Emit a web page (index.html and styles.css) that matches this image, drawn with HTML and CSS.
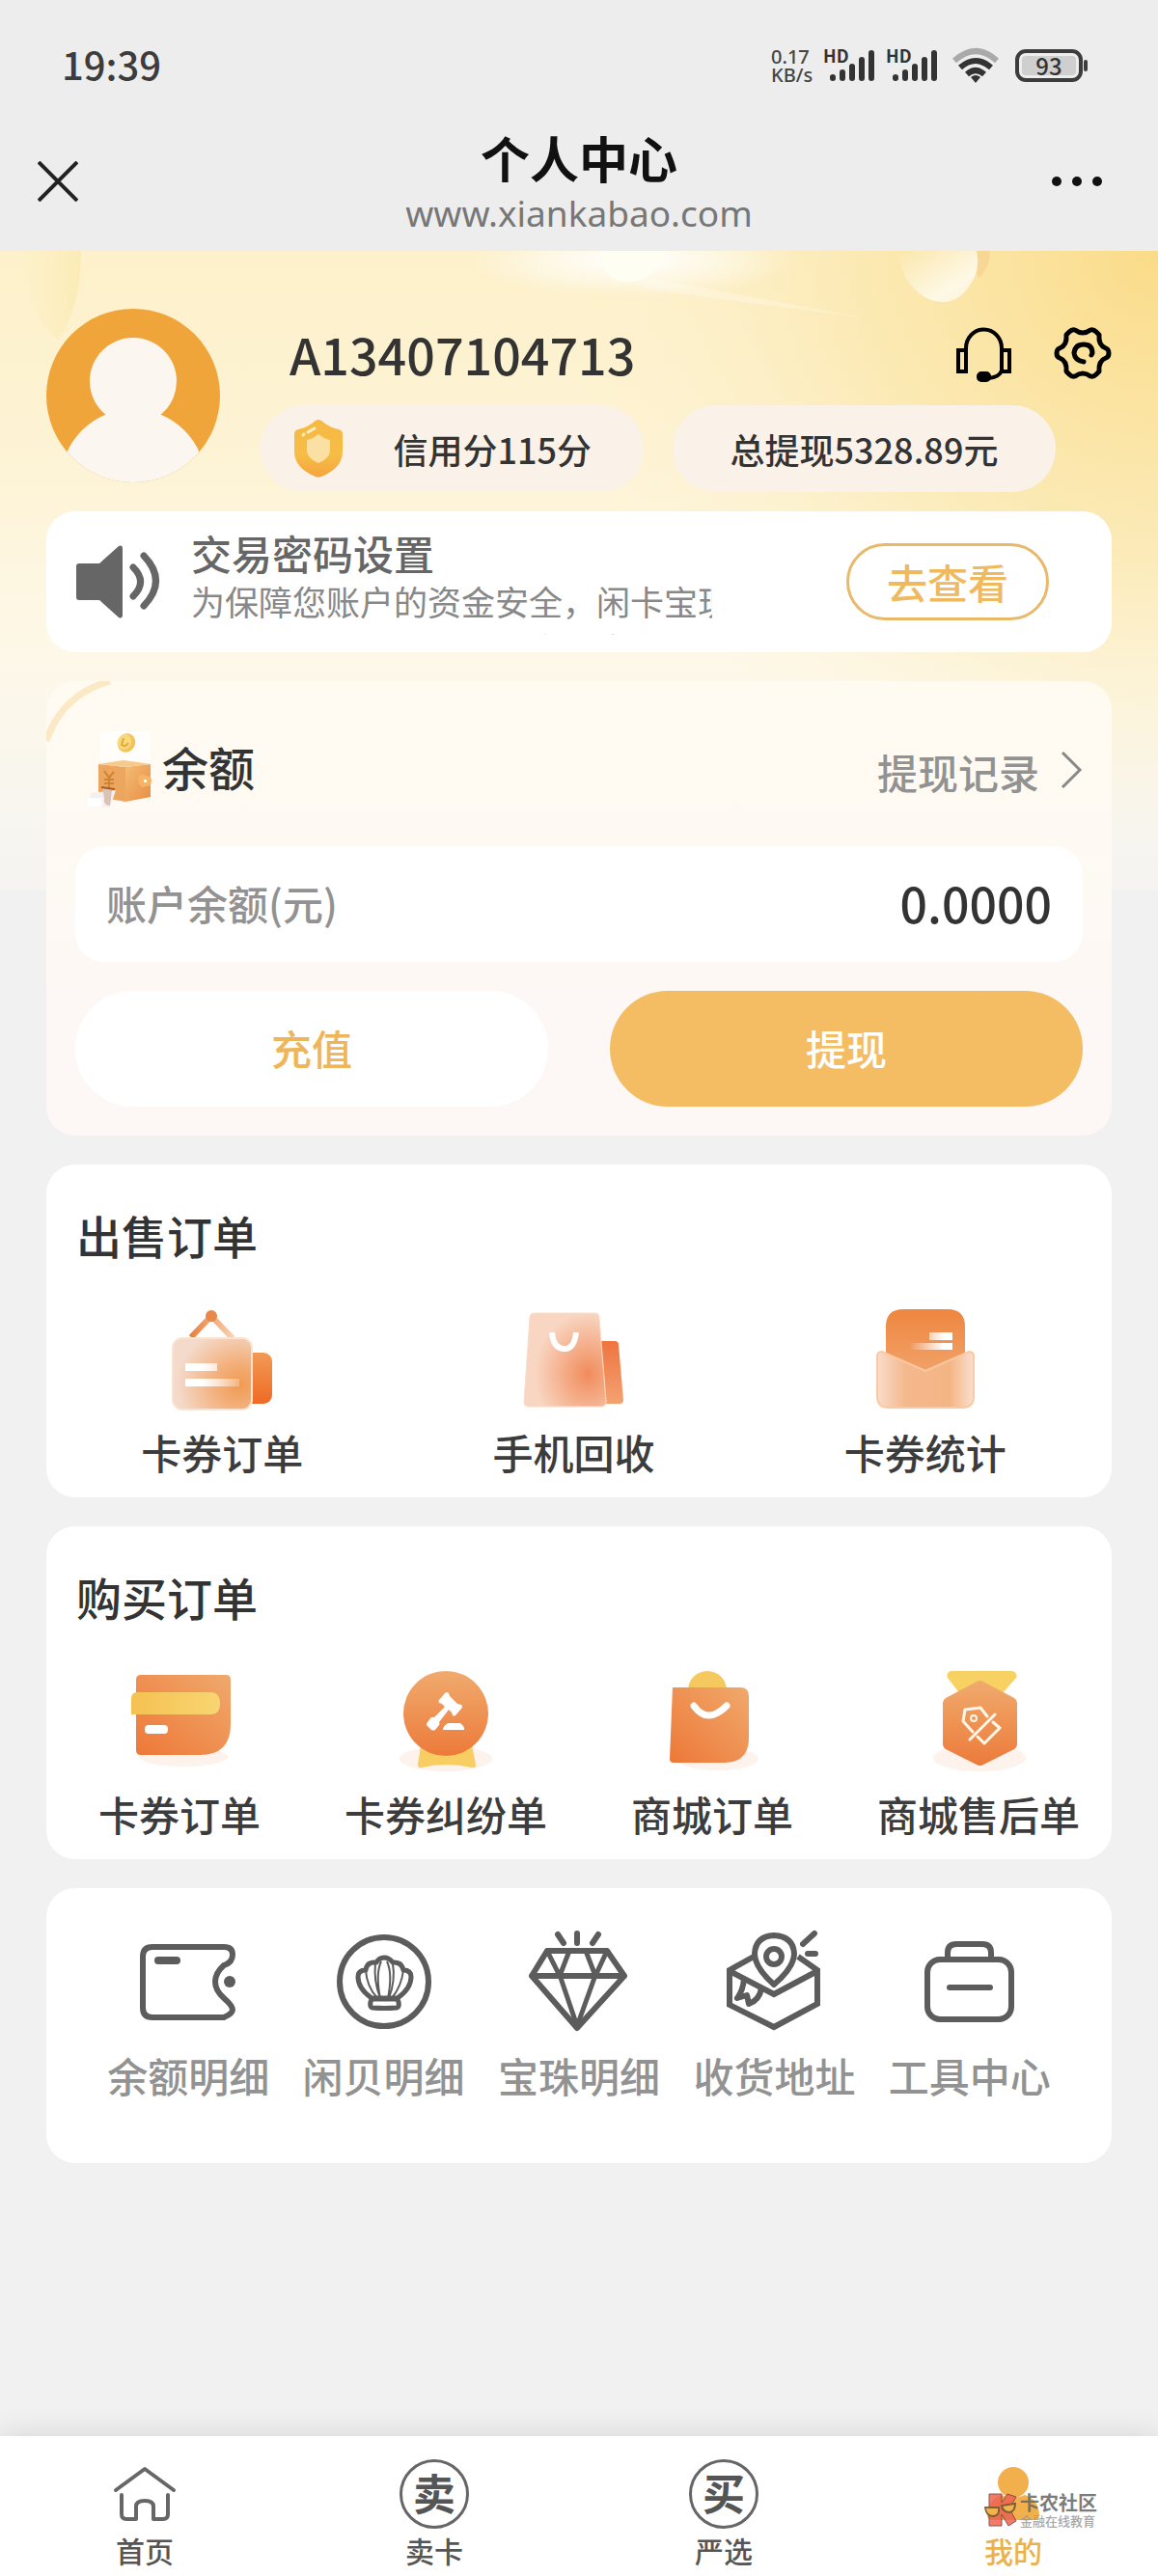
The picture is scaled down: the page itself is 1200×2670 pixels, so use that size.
FILE: index.html
```html
<!DOCTYPE html>
<html lang="zh-CN">
<head>
<meta charset="utf-8">
<meta name="viewport" content="width=device-width, initial-scale=1">
<title>个人中心</title>
<link rel="stylesheet" href="styles.css">
</head>
<body>
<header class="top">
  <div class="status">
    <span class="clock">19:39</span>
    <div class="status-right">
      <span class="speed">0.17<br>KB/s</span>
      <span class="signal"><b>HD</b><svg width="50" height="34" viewBox="0 0 50 34" stroke="#333" stroke-width="6" stroke-linecap="round"><path d="M4 30v-1M14 30v-6M24 30V18M34 30V11M44 30V4"/></svg></span>
      <span class="signal"><b>HD</b><svg width="50" height="34" viewBox="0 0 50 34" stroke="#333" stroke-width="6" stroke-linecap="round"><path d="M4 30v-1M14 30v-6M24 30V18M34 30V11M44 30V4"/></svg></span>
      <svg class="wifi" width="50" height="38" viewBox="0 0 50 38" fill="none" stroke-width="6"><path stroke="#aaa" d="M3 14q22-20 44 0"/><path stroke="#333" d="M9 21q16-14 32 0M16 28q9-8 18 0"/><path fill="#333" d="M25 37l-5-6q5-4 10 0z"/></svg>
      <span class="battery"><span>93</span></span>
    </div>
  </div>
  <nav class="nav">
    <button class="nav-btn" type="button" aria-label="关闭"><svg width="42" height="42" viewBox="0 0 42 42" stroke="#222" stroke-width="4"><path d="M1 1l40 40M41 1L1 41"/></svg></button>
    <div class="nav-title"><h1>个人中心</h1><p>www.xiankabao.com</p></div>
    <button class="nav-btn" type="button" aria-label="更多"><svg width="54" height="12" viewBox="0 0 54 12" fill="#111"><circle cx="6" cy="6" r="5"/><circle cx="27" cy="6" r="5"/><circle cx="48" cy="6" r="5"/></svg></button>
  </nav>
</header>

<main class="page">
  <svg class="hero" viewBox="0 0 1200 662" preserveAspectRatio="none" aria-hidden="true">
    <defs>
      <linearGradient id="hv" x1="0" y1="0" x2="0" y2="1"><stop offset="0" stop-color="#fdf1cb"/><stop offset=".3" stop-color="#fdf3d4"/><stop offset=".65" stop-color="#fdf8e9"/><stop offset="1" stop-color="#f5f4f2"/></linearGradient>
      <radialGradient id="hr" cx="1200" cy="0" r="620" gradientUnits="userSpaceOnUse"><stop offset="0" stop-color="#fadb88"/><stop offset=".5" stop-color="#fbe7ab" stop-opacity=".75"/><stop offset="1" stop-color="#fdf2cf" stop-opacity="0"/></radialGradient>
      <radialGradient id="hf"><stop offset="0" stop-color="#fff"/><stop offset="1" stop-color="#fff" stop-opacity="0"/></radialGradient>
      <linearGradient id="hs" x1="0" y1="0" x2="1" y2="1"><stop offset="0" stop-color="#fbe7ab"/><stop offset=".7" stop-color="#fef8e6"/><stop offset="1" stop-color="#fdf0cc"/></linearGradient>
      <linearGradient id="hl" x1="0" y1="0" x2="1" y2="0"><stop offset="0" stop-color="#fcedb8" stop-opacity="0"/><stop offset="1" stop-color="#faeab0"/></linearGradient>
    </defs>
    <path fill="url(#hv)" d="M0 0h1200v662H0z"/>
    <path fill="url(#hr)" d="M500 0h700v662H500z"/>
    <path fill="url(#hl)" d="M20 0h64q0 60-24 92Q30 70 20 0z" opacity=".8"/>
    <ellipse cx="655" cy="10" rx="170" ry="38" fill="url(#hf)"/>
    <path d="M622 0h72q-18 32-44 32T622 0z" fill="#fffef2"/>
    <path d="M660 26l240 44-230-30z" fill="#fff" opacity=".25"/>
    <path d="M1004 0h22q0 18-12 28z" fill="#f8d795"/>
    <path d="M930 0h82q4 20-6 34-12 20-30 19-20-1-34-20-10-14-12-33z" fill="url(#hs)"/>
  </svg>

  <section class="profile">
    <svg class="avatar" viewBox="0 0 180 180" role="img" aria-label="头像"><defs><clipPath id="av"><circle cx="90" cy="90" r="90"/></clipPath></defs><g clip-path="url(#av)"><path fill="#f0a53a" d="M0 0h180v180H0z"/><g fill="#fcf6f1"><circle cx="90" cy="75" r="45"/><circle cx="90" cy="179" r="75"/></g></g></svg>
    <div class="profile-info">
      <div class="name-row">
        <strong class="name">A13407104713</strong>
        <button type="button" aria-label="客服"><svg width="60" height="58" viewBox="0 0 60 58" fill="none" stroke="#000" stroke-width="4"><path d="M11 25v-2a18 19 0 0 1 37 0v2"/><path d="M3 25h8v22H3zM48 25h8v22h-8z"/><path d="M48 46q-2 7-14 8"/><rect x="24" y="49" width="11" height="7" rx="3" fill="#000"/></svg></button>
        <button type="button" aria-label="设置"><svg width="60" height="58" viewBox="0 0 60 58" fill="none" stroke="#000" stroke-width="5" stroke-linejoin="round" stroke-linecap="round"><path d="M22 4q8 6 16 0 3-1 6 2l3 3q-1 11 7 14 3 1 3 5t-3 5q-8 3-7 14l-3 3q-3 3-6 2-8-6-16 0-3 1-6-2l-3-3q1-11-7-14-3-1-3-5t3-5q8-3 7-14l3-3q3-3 6-2z"/><path d="M31 37q-9-1-10-9 1-9 10-9t9 9l-1 2"/></svg></button>
      </div>
      <div class="pills">
        <span class="pill pill-credit"><svg width="52" height="62" viewBox="0 0 52 62"><defs><linearGradient id="sh" x1="0" y1="0" x2="0" y2="1"><stop offset="0" stop-color="#f6b944"/><stop offset=".6" stop-color="#f7bd45"/><stop offset="1" stop-color="#f5a43f"/></linearGradient></defs><path fill="url(#sh)" d="M23 2q3-2 6 0 8 7 18 9 4 1 4 5v18q0 17-22 26-3 1-6 0Q1 51 1 34V16q0-4 4-5 10-2 18-9z"/><path fill="#fbe0a3" d="M26 16q6 5 12 6v11q0 8-12 13-12-5-12-13V22q6-1 12-6z"/><path d="M10 17l1-1M15 14l7-4" stroke="#fff0c8" stroke-width="3" stroke-linecap="round"/></svg>信用分115分</span>
        <span class="pill">总提现5328.89元</span>
      </div>
    </div>
  </section>

  <section class="notice">
    <svg class="speaker" width="88" height="78" viewBox="0 0 88 78"><path fill="#666" d="M3 20h21L44 2q4-2 4 3v68q0 5-4 3L24 58H3q-3 0-3-3V23q0-3 3-3z"/><path fill="none" stroke="#666" stroke-width="7" stroke-linecap="round" d="M59 24q15 15 0 30M70 12q25 26 0 52"/></svg>
    <div class="notice-text"><h2>交易密码设置</h2><p>为保障您账户的资金安全，闲卡宝现<br>请尽快前往设置页面，完成密码设置</p></div>
    <button class="notice-btn" type="button">去查看</button>
  </section>

  <section class="balance">
    <svg class="balance-arc" width="90" height="90" viewBox="0 0 90 90" fill="none" stroke="#fbe9c6" stroke-width="7" aria-hidden="true"><path d="M0 62Q16 14 66 0"/></svg>
    <div class="balance-head">
      <svg width="88" height="84" viewBox="0 0 88 84"><defs><linearGradient id="wb" x1="0" y1="0" x2="1" y2="1"><stop offset="0" stop-color="#f3bd74"/><stop offset="1" stop-color="#e98d45"/></linearGradient></defs><path fill="#fff" opacity=".7" d="M26 2h52v30H26z"/><ellipse cx="53" cy="14" rx="9" ry="10" fill="#f0c458" transform="rotate(25 53 14)"/><ellipse cx="51" cy="13" rx="7" ry="8" fill="#f8d97c" transform="rotate(25 51 13)"/><path d="M50 9l-2 7q4 3 7-2" fill="none" stroke="#e0aa3c" stroke-width="2"/><path fill="#eda660" d="M24 36l28 3v36l-28-5z"/><path fill="url(#wb)" d="M52 39l26-3v34l-26 5z"/><path fill="#f7c98c" d="M24 36l26-4 28 4-26 3z"/><path d="M30 43l5 7 5-6M35 50v10M30 52h10M30 56h10" fill="none" stroke="#cf8335" stroke-width="2"/><path fill="#f6b565" d="M65 50q3-6 7-2 7 0 7 5 0 6-6 6-7 4-8-9z"/><path fill="#fff" d="M71 52h3v3h-3z"/><path fill="#f6efef" d="M16 66l26-3-6 18-22-1z"/><path fill="#d9c2b6" d="M28 60l10 3-2 16q-7 0-6-8z"/><path d="M27 60l14 2" stroke="#a95a20" stroke-width="2"/><path fill="#fff" d="M12 71h16v9H12z"/></svg>
      <h2>余额</h2>
      <a href="#records"><span>提现记录</span><svg width="26" height="40" viewBox="0 0 26 40" fill="none" stroke="#888" stroke-width="3"><path d="M5 2l18 18L5 38"/></svg></a>
    </div>
    <div class="balance-row"><span>账户余额(元)</span><strong>0.0000</strong></div>
    <div class="balance-actions"><button type="button" class="recharge">充值</button><button type="button" class="withdraw">提现</button></div>
  </section>

  <section class="card">
    <h2>出售订单</h2>
    <div class="items items-3">
      <a href="#sell-cards"><svg width="120" height="120" viewBox="0 0 120 120"><defs><linearGradient id="a1" x1="0" y1="0" x2="0" y2="1"><stop offset="0" stop-color="#f29a55"/><stop offset="1" stop-color="#ee6a25"/></linearGradient><radialGradient id="a2" cx=".85" cy=".65" r=".8"><stop offset="0" stop-color="#f09a52"/><stop offset=".4" stop-color="#f3b07c"/><stop offset="1" stop-color="#f4dacb"/></radialGradient><linearGradient id="a3"><stop offset="0" stop-color="#ea813f"/><stop offset="1" stop-color="#f9d0b0"/></linearGradient><linearGradient id="w1"><stop offset=".3" stop-color="#fff"/><stop offset="1" stop-color="#fff" stop-opacity=".25"/></linearGradient></defs><path d="M28 36l21-22 22 23" fill="none" stroke="url(#a3)" stroke-width="6"/><circle cx="49" cy="14" r="6" fill="#e9884b"/><rect x="80" y="52" width="32" height="53" rx="9" fill="url(#a1)"/><rect x="9" y="37" width="82" height="74" rx="10" fill="url(#a2)" stroke="#fbe3d2" stroke-width="2"/><path d="M22 63h33v8H22zM22 79h56v8H22z" fill="url(#w1)"/></svg>卡券订单</a>
      <a href="#phones"><svg width="120" height="120" viewBox="0 0 120 120"><defs><linearGradient id="b1" x1="0" y1="0" x2="0" y2="1"><stop offset="0" stop-color="#ee7440"/><stop offset="1" stop-color="#f4a271"/></linearGradient><radialGradient id="b2" cx=".78" cy=".65" r=".65"><stop offset="0" stop-color="#f08c5c"/><stop offset=".4" stop-color="#f4a983"/><stop offset="1" stop-color="#f8d6c2"/></radialGradient></defs><path fill="url(#b1)" d="M86 40h17q4 0 4 4l5 57q0 4-4 4H86z"/><path fill="url(#b2)" stroke="#fbdcc9" d="M20 11h62q5 0 5 5l7 86q0 6-5 6H14q-5 0-5-5l6-87q0-5 5-5z"/><path d="M38 31q1 16 12 17t13-17" fill="none" stroke="#fff" stroke-width="6"/></svg>手机回收</a>
      <a href="#stats"><svg width="120" height="120" viewBox="0 0 120 120"><defs><linearGradient id="c1" x1="0" y1="0" x2="0" y2="1"><stop offset="0" stop-color="#ee8640"/><stop offset="1" stop-color="#f1a36a"/></linearGradient><linearGradient id="c2"><stop offset="0" stop-color="#fadccb"/><stop offset=".3" stop-color="#f4b88c"/><stop offset=".75" stop-color="#f4b584"/><stop offset="1" stop-color="#fadfd0"/></linearGradient><linearGradient id="w2"><stop offset="0" stop-color="#fff" stop-opacity="0"/><stop offset=".8" stop-color="#fff"/></linearGradient></defs><path fill="url(#c1)" d="M37 7h46q18 0 18 18v50H19V25Q19 7 37 7z"/><path d="M64 31h24v8H64zM43 42h45v7H43z" fill="url(#w2)"/><path fill="url(#c2)" stroke="#fac9a3" stroke-width="2" d="M15 51l45 20 45-20q5 0 5 5v41q0 12-12 12H22q-12 0-12-12V56q0-5 5-5z"/></svg>卡券统计</a>
    </div>
  </section>

  <section class="card">
    <h2>购买订单</h2>
    <div class="items items-4">
      <a href="#buy-cards"><svg width="120" height="120" viewBox="0 0 120 120"><defs><linearGradient id="o1" x1="0" y1="1" x2="1" y2="0"><stop offset="0" stop-color="#ed7838"/><stop offset="1" stop-color="#f0a96c"/></linearGradient><linearGradient id="y1"><stop offset="0" stop-color="#f5c152"/><stop offset="1" stop-color="#f8d572"/></linearGradient></defs><ellipse cx="64" cy="96" rx="46" ry="10" fill="#fdf2ec"/><path fill="url(#o1)" d="M20 11h88q5 0 5 5v46q0 32-32 32H20q-5 0-5-5V16q0-5 5-5z"/><path fill="url(#y1)" d="M16 29h76q10 0 10 11.500T92 52H10V36q0-7 6-7z"/><rect x="24" y="63" width="24" height="9" rx="4" fill="#fff"/></svg>卡券订单</a>
      <a href="#disputes"><svg width="120" height="120" viewBox="0 0 120 120"><defs><linearGradient id="o2" x1="0" y1="0" x2="0" y2="1"><stop offset="0" stop-color="#f0ab6d"/><stop offset="1" stop-color="#ec7a3a"/></linearGradient></defs><ellipse cx="60" cy="98" rx="48" ry="13" fill="#fdf2ec"/><path fill="#f8cd62" d="M34 84h53l4 20q0 4-4 3-27-6-52 0-4 1-4-3z"/><circle cx="60" cy="51" r="44" fill="url(#o2)"/><g fill="#fff"><path d="M59 30q2-2 4 0l1 3 8 8 4 1q2 2 0 4l-6 7q-2 1-3 0l-1-3-3-3-10 13q1 2 0 3l-4 5q-2 1-4 0l-5-5q0-2 1-3l3-4q2-2 4-1l11-11-3-3-3-1q-1-2 0-3z"/><path d="M62 61h13q5 4 4 7H57q0-4 5-7z"/></g></svg>卡券纠纷单</a>
      <a href="#mall"><svg width="120" height="120" viewBox="0 0 120 120"><ellipse cx="66" cy="98" rx="42" ry="12" fill="#fdf2ec"/><circle cx="55" cy="27" r="20" fill="#f5c95f"/><path fill="url(#o1)" d="M19 24h70q9 0 9 9v43q0 26-26 26H20q-4 0-4-4z"/><path d="M41 43q14 20 34 0" fill="none" stroke="#fff" stroke-width="7" stroke-linecap="round"/></svg>商城订单</a>
      <a href="#after-sales"><svg width="120" height="120" viewBox="0 0 120 120"><ellipse cx="61" cy="97" rx="48" ry="14" fill="#fdf2ec"/><path fill="#f7d162" d="M32 7h62q7 1 5 7L84 31H41L28 14q-2-6 4-7z"/><path fill="url(#o2)" d="M58 18q4-2 7 0l32 17q3 2 3 5v43q0 3-3 5l-32 16q-4 2-7 0L26 88q-3-2-3-5V40q0-3 3-5z"/><path d="M54 70L44 59l2-12 16-2 7 9M77 52L51 78M75 60l7 6-16 16-7-7" fill="none" stroke="#fff8ea" stroke-width="3" stroke-linecap="round" stroke-linejoin="round"/><circle cx="55" cy="56" r="3" fill="none" stroke="#fff8ea" stroke-width="2"/></svg>商城售后单</a>
    </div>
  </section>

  <section class="card tools">
    <div class="items items-5">
      <a href="#balance"><svg width="110" height="110" viewBox="0 0 110 110" fill="none" stroke="#5c5c5c" stroke-width="6"><path d="M18 18h74q9 0 9 8t-9 11Q83 45 83 54t9 17 9 12-9 8H18q-10 0-10-10V28q0-10 10-10z"/><path stroke-width="8" stroke-linecap="round" d="M24 32h19"/><circle cx="98" cy="54" r="6" fill="#5c5c5c" stroke="none"/></svg>余额明细</a>
      <a href="#shells"><svg width="110" height="110" viewBox="0 0 110 110" fill="none" stroke="#5c5c5c" stroke-width="6"><circle cx="55" cy="54" r="46"/><path stroke-width="5" stroke-linejoin="round" d="M42 71Q28 61 28 49q0-7 8-7 1-9 11-8 3-5 8-5t9 5q9-1 11 8 8 0 8 7 0 12-14 22zM42 72h27q3 8-1 9-13 1-25 0-4-1-1-9z"/><path stroke-width="2" d="M36 42q1 17 12 29M46 35q-2 18 5 36M51 71q-5-25 1-38M59 71q5-25-1-38M64 35q3 18-4 36M75 42q-2 17-12 29"/></svg>闲贝明细</a>
      <a href="#pearls"><svg width="110" height="110" viewBox="0 0 110 110" fill="none" stroke="#5c5c5c" stroke-width="6" stroke-linejoin="round" stroke-linecap="round"><path d="M6 48l16-26h62l18 26-49 54zM6 48h96"/><path stroke-width="5" d="M22 22l13 26 10-26M62 22l10 26 12-26M36 50l17 50 18-50"/><path d="M33 5l6 9M53 4v10M75 5l-6 9"/></svg>宝珠明细</a>
      <a href="#address"><svg width="110" height="110" viewBox="0 0 110 110" fill="none" stroke="#5c5c5c" stroke-width="6"><path d="M34 28L9 42v36l46 23 45-24V42L80 28M9 43l46 24 45-24"/><path stroke-linejoin="round" d="M55 57Q35 39 35 25q1-18 20-19 20 1 21 19 0 14-21 32zM24 51q-1 12-7 20l10-3 2 9q11-4 13-16"/><circle cx="55" cy="28" r="8"/><path stroke-linecap="round" d="M97 4L85 15M90 25h8"/></svg>收货地址</a>
      <a href="#tools"><svg width="110" height="110" viewBox="0 0 110 110" fill="none" stroke="#5c5c5c" stroke-width="6" stroke-linecap="round"><rect x="11" y="31" width="87" height="62" rx="13"/><path d="M32 31v-7q0-9 9-9h27q9 0 9 9v7M34 60h42"/></svg>工具中心</a>
    </div>
  </section>
</main>

<nav class="tabs">
  <a href="#home"><span class="tab-icon"><svg width="66" height="60" viewBox="0 0 66 60" fill="none" stroke="#666" stroke-width="4" stroke-linecap="round" stroke-linejoin="round"><path d="M3 26L33 4l30 22M9 31v20q0 5 5 5h10V43q0-6 9-6t9 6v13h10q5 0 5-5V31"/></svg></span>首页</a>
  <a href="#sell"><span class="tab-icon"><span class="ring">卖</span></span>卖卡</a>
  <a href="#select"><span class="tab-icon"><span class="ring">买</span></span>严选</a>
  <a href="#me" class="active" aria-current="page"><span class="tab-icon"><svg width="60" height="60" viewBox="0 0 60 60" fill="#f2b04d"><circle cx="30" cy="18" r="16"/><path d="M18 31q12 6 24 0 14 5 15 20 0 6-5 6H8q-5 0-5-6 1-15 15-20z"/></svg></span>我的
    <span class="brand"><svg width="34" height="36" viewBox="0 0 34 36"><path fill="#ee6353" stroke="#7b3a34" d="M5 2h13v9l6-9 9 3-7 12 7 13-8 5-7-12v12H5z"/><path fill="#f3b450" stroke="#6d5130" stroke-width="2" d="M1 16l14 0q1 9-6 9-7 0-8-9zM18 14l14-2q0 8-6 9-7 0-8-7z"/></svg><span><b>卡农社区</b><i>金融在线教育</i></span></span>
  </a>
</nav>
</body>
</html>
```
FILE: styles.css
```css
* { box-sizing: border-box; }
body {
  margin: 0;
  min-height: 100vh;
  display: flex;
  flex-direction: column;
  background: #f1f1f1;
  color: #333;
  font-family: "Noto Sans CJK SC", sans-serif;
  font-weight: 500;
}
h1, h2, p { margin: 0; font-weight: 500; }
a { color: inherit; text-decoration: none; }
button { padding: 0; border: 0; background: none; color: inherit; font: inherit; }
svg { display: block; flex: none; }

.top { background: #ededed; }
.status { display: flex; justify-content: space-between; align-items: center; height: 116px; padding: 20px 78px 0 64px; }
.clock { padding-bottom: 4px; font-size: 40px; line-height: 48px; color: #3c3c3c; }
.status-right { display: flex; align-items: center; color: #333; }
.speed { width: 54px; font-family: "Noto Sans", sans-serif; font-size: 20px; line-height: 19px; color: #444; }
.signal { position: relative; width: 56px; padding-left: 6px; }
.signal + .signal { margin-left: 9px; }
.signal b { position: absolute; left: 0; top: -3px; font-size: 18px; line-height: 18px; }
.wifi { margin: 0 16px 0 12px; }
.battery { position: relative; width: 70px; height: 34px; padding: 3px; border: 4px solid #3c3c3c; border-radius: 11px; }
.battery span { display: block; background: #cfcfcf; border-radius: 4px; font-size: 24px; line-height: 20px; text-align: center; }
.battery::after { content: ""; position: absolute; right: -9px; top: 7px; width: 4px; height: 12px; border-radius: 2px; background: #3c3c3c; }
.nav { display: grid; grid-template-columns: 1fr auto 1fr; align-items: center; height: 144px; padding: 0 39px; }
.nav-btn { display: flex; }
.nav-btn:last-child { justify-content: flex-end; padding-right: 18px; }
.nav-title { padding-top: 6px; text-align: center; }
.nav-title h1 { font-size: 51px; line-height: 60px; font-weight: 700; color: #111; }
.nav-title p { font-family: "Noto Sans", sans-serif; font-size: 37px; line-height: 56px; font-weight: 400; color: #777; }

.page { position: relative; flex: 1; display: flex; flex-direction: column; gap: 30px; padding: 60px 48px 48px; }
.page > section { position: relative; }
.hero { position: absolute; left: 0; top: 0; width: 100%; height: 662px; }

.profile { display: flex; gap: 42px; margin-bottom: -10px; }
.avatar { width: 180px; height: 180px; }
.profile-info { flex: 1; }
.name-row { display: flex; align-items: center; height: 94px; margin-bottom: 6px; padding-left: 30px; gap: 42px; }
.name { margin-right: auto; font-size: 52px; line-height: 60px; font-weight: 500; }
.pills { display: grid; grid-template-columns: 1fr 1fr; gap: 30px; margin-right: 58px; }
.pill { display: flex; align-items: center; justify-content: center; height: 90px; border-radius: 45px; background: #faf1e9; font-size: 36px; line-height: 50px; white-space: nowrap; }
.pill-credit { justify-content: space-between; padding: 0 54px 0 34px; }

.notice { display: flex; align-items: center; height: 146px; padding: 0 65px 0 31px; border-radius: 30px; background: #fff; }
.notice-text { flex: 1; height: 110px; margin: 0 139px 0 31px; overflow: hidden; }
.notice-text h2 { font-size: 42px; line-height: 50px; color: #666; }
.notice-text p { font-size: 35px; line-height: 50px; font-weight: 400; color: #888; white-space: nowrap; }
.notice-btn { width: 210px; height: 80px; border: 3px solid #e9b96a; border-radius: 40px; color: #efb95f; font-size: 42px; line-height: 50px; }

.balance { padding: 30px; border-radius: 30px; background: linear-gradient(#fffbf1, #fdf8f5 70%); overflow: hidden; }
.balance-arc { position: absolute; left: 0; top: 0; }
.balance-head { display: flex; align-items: center; height: 124px; margin-bottom: 17px; }
.balance-head h2 { margin-right: auto; padding: 0 0 8px 2px; font-size: 48px; line-height: 60px; }
.balance-head a { display: flex; align-items: center; gap: 19px; font-size: 42px; line-height: 56px; color: #929292; }
.balance-head a span { padding-top: 4px; }
.balance-row { display: flex; align-items: center; justify-content: space-between; height: 120px; padding: 0 32px 4px; border-radius: 30px; background: #fff; font-size: 42px; color: #929292; }
.balance-row strong { font-size: 50px; font-weight: 500; color: #333; }
.balance-actions { display: grid; grid-template-columns: 1fr 1fr; gap: 64px; margin-top: 30px; }
.balance-actions button { height: 120px; padding-bottom: 4px; border-radius: 60px; font-size: 42px; }
.recharge { background: #fff; color: #eeb55a; }
.withdraw { background: #f4bd64; color: #fff; }

.card { padding: 43px 0 19px; border-radius: 30px; background: #fff; }
.card h2 { padding-left: 31px; font-size: 47px; line-height: 60px; }
.items { display: grid; margin-top: 40px; }
.items a { display: flex; flex-direction: column; align-items: center; gap: 7px; font-size: 42px; line-height: 56px; color: #3c3c3c; white-space: nowrap; }
.items-3 { grid-template-columns: repeat(3, 33%); }
.items-4 { grid-template-columns: repeat(4, 1fr); }
.items-5 { grid-template-columns: repeat(5, 1fr); margin-top: 0; }
.tools { padding: 43px 46px 63px; }
.tools .items a { gap: 13px; color: #929292; }

.tabs { position: relative; display: grid; grid-template-columns: repeat(4, 1fr); padding: 22px 0 7px; background: #fff; box-shadow: 0 0 30px rgba(0, 0, 0, .12); }
.tabs a { position: relative; display: flex; flex-direction: column; align-items: center; font-size: 30px; line-height: 40px; color: #555; }
.tab-icon { display: flex; align-items: center; justify-content: center; height: 76px; }
.ring { width: 72px; height: 72px; border: 3px solid #666; border-radius: 50%; font-size: 44px; line-height: 62px; font-weight: 700; text-align: center; color: #555; }
.tabs .active { color: #e9b24f; }
.brand { position: absolute; left: 40%; top: 36px; display: flex; gap: 3px; opacity: .85; }
.brand b, .brand i { display: block; font-style: normal; white-space: nowrap; color: #666; }
.brand b { font-size: 20px; line-height: 22px; font-weight: 700; }
.brand i { font-size: 13px; line-height: 16px; color: #999; }
```
